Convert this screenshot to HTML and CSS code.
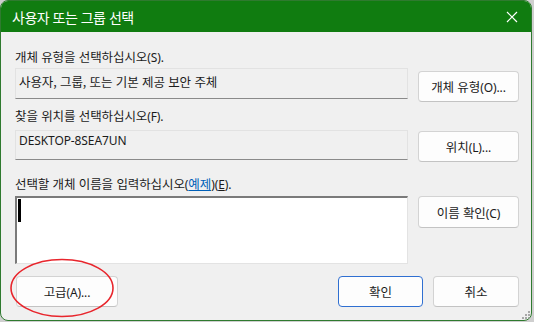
FILE: index.html
```html
<!DOCTYPE html>
<html lang="ko">
<head>
<meta charset="utf-8">
<link rel="stylesheet" href="styles.css">
</head>
<body>
<div class="window">
  <div class="titlebar">
    <span class="title">사용자 또는 그룹 선택</span>
    <svg class="close" width="12" height="12" viewBox="0 0 12 12"><path d="M1 1 L11 11 M11 1 L1 11" stroke="#fff" stroke-width="1.2" fill="none"/></svg>
  </div>
  <div class="content">
    <div class="label l1">개체 유형을 선택하십시오<span class="mn">(S).</span></div>
    <div class="row r1">
      <div class="field">사용자, 그룹, 또는 기본 제공 보안 주체</div>
      <button class="btn side b1">개체 유형<span class="mn">(O)...</span></button>
    </div>
    <div class="label l2">찾을 위치를 선택하십시오<span class="mn">(F).</span></div>
    <div class="row r2">
      <div class="field f2">DESKTOP-8SEA7UN</div>
      <button class="btn side b2">위치<span class="mn">(L)...</span></button>
    </div>
    <div class="label l3">선택할 개체 이름을 입력하십시오<span class="mn">(</span><span class="link">예제</span><span class="mn">)(<u>E</u>).</span></div>
    <div class="row r3">
      <div class="textarea"><span class="caret"></span></div>
      <button class="btn side b3">이름 확인<span class="mn">(C)</span></button>
    </div>
    <div class="bottom">
      <button class="btn adv">고급<span class="mn">(A)...</span></button>
      <div class="spacer"></div>
      <button class="btn ok">확인</button>
      <button class="btn cancel">취소</button>
    </div>
  </div>
  <svg class="ring" width="110" height="62" viewBox="0 0 110 62"><ellipse cx="53" cy="30" rx="51" ry="28.5" fill="none" stroke="#e8262d" stroke-width="1.6"/></svg>
  <svg class="grip" width="10" height="10" viewBox="0 0 10 10" fill="#a8a8a8">
    <rect x="7" y="1" width="2" height="2"/>
    <rect x="4" y="4" width="2" height="2"/><rect x="7" y="4" width="2" height="2"/>
    <rect x="1" y="7" width="2" height="2"/><rect x="4" y="7" width="2" height="2"/><rect x="7" y="7" width="2" height="2"/>
  </svg>
</div>
</body>
</html>
```
FILE: styles.css
```css
html, body {
  margin: 0;
  padding: 0;
}
body {
  background: #cfcfcf;
  width: 534px;
  height: 322px;
  font-family: "Noto Sans CJK KR", "Noto Sans", sans-serif;
  color: #1b1b1b;
}
.window {
  position: relative;
  box-sizing: border-box;
  width: 532px;
  height: 321px;
  border: 1px solid #2f7a2f;
  border-radius: 8px;
  background: #f0f0f0;
  overflow: hidden;
}
.titlebar {
  height: 31px;
  background: #107c10;
  display: flex;
  align-items: center;
  padding-left: 11px;
  padding-right: 13px;
}
.title {
  color: #fff;
  font-size: 14px;
  letter-spacing: -0.5px;
  flex: 1;
}
.close {
  display: block;
}
.content {
  padding: 0 12px 0 14px;
}
.label {
  font-size: 12.5px;
  line-height: 17px;
  letter-spacing: -0.1px;
}
.mn {
  font-family: "Noto Sans", sans-serif;
  font-size: 12px;
}
.l1 { margin-top: 16px; }
.l2 { margin-top: 5px; }
.l3 { margin-top: 13px; }
.link {
  color: #0060b8;
  text-decoration: underline;
}
.row {
  display: flex;
  align-items: flex-start;
  gap: 10px;
}
.r1 { margin-top: 2px; }
.r2 { margin-top: 5px; }
.r3 { margin-top: 3px; }
.field {
  box-sizing: border-box;
  width: 393px;
  height: 31px;
  border: 1px solid #e2e2e2;
  border-bottom: 1px solid #8a8a8a;
  background: #f0f0f0;
  font-size: 12.5px;
  line-height: 17px;
  padding: 4px 0 0 3px;
  letter-spacing: -0.1px;
}
.f2 {
  height: 30px;
  font-family: "Noto Sans", sans-serif;
  font-size: 12px;
  padding-top: 1px;
}
.textarea {
  box-sizing: border-box;
  width: 393px;
  height: 68px;
  background: #fff;
  border-top: 2px solid #7a7a7a;
  border-left: 2px solid #7a7a7a;
  border-right: 1px solid #e3e3e3;
  border-bottom: 1px solid #e3e3e3;
  padding: 1px 0 0 1px;
}
.caret {
  display: block;
  width: 3px;
  height: 23px;
  background: #000;
}
.btn {
  box-sizing: border-box;
  height: 31px;
  background: #fdfdfd;
  border: 1px solid #d3d3d3;
  border-bottom-color: #c3c3c3;
  border-radius: 4px;
  font-family: "Noto Sans CJK KR", "Noto Sans", sans-serif;
  font-size: 12.5px;
  color: #1b1b1b;
  padding: 0;
  letter-spacing: -0.1px;
}
.side {
  width: 101px;
}
.b1 { margin-top: 3px; }
.b2 { margin-top: 1px; }
.b3 { height: 32px; }
.bottom {
  display: flex;
  align-items: center;
  margin-top: 12px;
  gap: 10px;
}
.adv {
  width: 102px;
  margin-left: 1px;
}
.spacer { flex: 1; }
.ok {
  width: 85px;
  border: 1px solid #2f6fd1;
}
.cancel {
  width: 86px;
}
.ring {
  position: absolute;
  left: 8px;
  top: 257px;
}
.grip {
  position: absolute;
  right: 0px;
  bottom: 0px;
}
```
